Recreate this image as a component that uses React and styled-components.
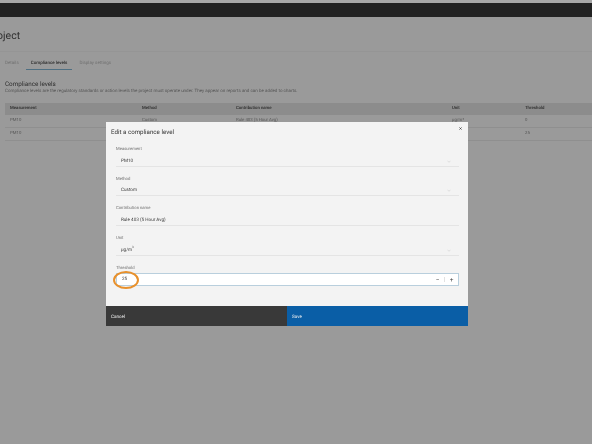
import React from "react";
import styled, { createGlobalStyle } from "styled-components";

const Global = createGlobalStyle`
  html, body { margin: 0; padding: 0; width: 592px; height: 444px; overflow: hidden; background: #9a9a9a; }
  body { font-family: Roboto, "Liberation Sans", sans-serif; text-rendering: geometricPrecision; }
  * { box-sizing: border-box; }
`;
const Page = styled.div`
  position: relative; width: 592px; height: 444px; overflow: hidden; background: #9a9a9a;
  color: #3a3a3a; filter: blur(0.35px);
`;
const TopStrip = styled.div`height: 3px; background: #a8a8a8;`;
const TopBar = styled.div`height: 14px; background: #222222;`;
const TitleBar = styled.div`
  height: 35px; margin-left: -13px; padding-top: 12px;
  border-bottom: 1px solid #959595; font-size: 10.5px; line-height: 13px; color: #2e2e2e;
`;
const Tabs = styled.nav`display: flex; gap: 12px; padding: 8px 0 0 5px; height: 19px;`;
const Tab = styled.div`
  position: relative; font-size: 4.5px; line-height: 8px; white-space: nowrap;
  font-weight: ${p => (p.$active ? 500 : 400)};
  color: ${p => (p.$active ? "#2c2c2c" : "#707070")};
  ${p => p.$active && `
    &::after { content: ""; position: absolute; left: -5px; right: -5px; top: 9px; height: 1px; background: #4f6f82; }
  `}
`;
const Section = styled.section`padding: 8.5px 0 0 5px;`;
const Heading = styled.h2`margin: 0; font-weight: 400; font-size: 6.3px; line-height: 9px; color: #2e2e2e;`;
const Description = styled.p`margin: 0; font-size: 4.5px; line-height: 6px; color: #555; white-space: nowrap;`;
const Table = styled.div`margin-top: 8px;`;
const Row = styled.div`
  display: grid; grid-template-columns: 132px 94px 216px 73px 1fr; align-items: center;
  height: ${p => (p.$head ? "12px" : "13px")}; padding: ${p => (p.$head ? "1px" : "0")} 0 0 5px;
  background: ${p => (p.$head ? "#8c8c8c" : "#9a9a9a")};
  border-bottom: 1px solid ${p => (p.$head ? "#8c8c8c" : "#8f8f8f")};
  font-size: 4.3px; font-weight: ${p => (p.$head ? 500 : 400)};
  color: ${p => (p.$head ? "#2a2a2a" : "#565656")};
`;
const Overlay = styled.div`
  position: absolute; left: 106px; top: 122px; width: 362px; height: 204px;
  background: #f3f3f3; display: flex; flex-direction: column;
`;
const ModalHead = styled.div`display: flex; justify-content: space-between; padding: 5px 6px 0 5px; height: 25px;`;
const ModalTitle = styled.div`font-size: 6.2px; line-height: 10px; color: #333;`;
const Close = styled.svg`width: 3px; height: 3px; margin-top: 0; margin-right: 0;`;
const Form = styled.div`flex: 1; padding: 0 9px 0 10px; display: flex; flex-direction: column; gap: 10.2px;`;
const Field = styled.div`display: flex; flex-direction: column;`;
const Label = styled.label`font-size: 4.2px; line-height: 6px; height: 6px; color: #707070;`;
const Control = styled.div`
  height: 13.5px; padding: 3.5px 5px 0; display: flex; align-items: center; justify-content: space-between;
  border-bottom: 1px solid #e4e4e4; font-size: 4.6px; color: #3a3a3a;
`;
const Sup = styled.sup`font-size: 3px; line-height: 0;`;
const Chevron = styled.svg`width: 4px; height: 3px; margin-right: 3px;`;
const NumberInput = styled.div`
  height: 13.5px; margin-top: 1.2px; padding: 0 0 0 5px; display: flex; align-items: center; justify-content: space-between;
  background: #fff; border: 1px solid #b9cfdd; border-bottom-width: 1.5px; font-size: 4.6px; color: #3a3a3a;
`;
const Stepper = styled.div`display: flex; align-items: center; height: 100%;`;
const Step = styled.span`width: 13px; text-align: center; font-size: 6.5px; line-height: 12px; color: #444;`;
const Divider = styled.span`width: 1px; height: 5px; background: #e2e2e2;`;
const Footer = styled.div`display: grid; grid-template-columns: 181px 181px; height: 20px;`;
const FooterButton = styled.div`
  background: ${p => (p.$primary ? "#0a5ea6" : "#393939")}; color: #f2f2f2;
  font-size: 4.6px; padding: 2px 5px 0; display: flex; align-items: center;
`;
const Annotation = styled.svg`position: absolute; left: 113px; top: 271px; width: 26px; height: 18px;`;

const ChevronIcon = () => (
  <Chevron viewBox="0 0 8 6"><path d="M1 1.5l3 3 3-3" fill="none" stroke="#d0d0d0" strokeWidth="1.2" /></Chevron>
);

export default function App() {
  return (
    <Page>
      <Global />
      <TopStrip />
      <TopBar />
      <TitleBar>Project</TitleBar>
      <Tabs>
        <Tab>Details</Tab>
        <Tab $active>Compliance levels</Tab>
        <Tab>Display settings</Tab>
      </Tabs>
      <Section>
        <Heading>Compliance levels</Heading>
        <Description>Compliance levels are the regulatory standards or action levels the project must operate under. They appear on reports and can be added to charts.</Description>
        <Table>
          <Row $head><span>Measurement</span><span>Method</span><span>Contribution name</span><span>Unit</span><span>Threshold</span></Row>
          <Row><span>PM10</span><span>Custom</span><span>Rule 403 (5 Hour Avg)</span><span>µg/m³</span><span>0</span></Row>
          <Row><span>PM10</span><span>Custom</span><span>Rule 403 (5 Hour Avg)</span><span>µg/m³</span><span>25</span></Row>
        </Table>
      </Section>
      <Overlay>
        <ModalHead>
          <ModalTitle>Edit a compliance level</ModalTitle>
          <Close viewBox="0 0 8 8"><path d="M1 1l6 6M7 1l-6 6" stroke="#333" strokeWidth="1.8" /></Close>
        </ModalHead>
        <Form>
          <Field><Label>Measurement</Label><Control>PM10<ChevronIcon /></Control></Field>
          <Field><Label>Method</Label><Control>Custom<ChevronIcon /></Control></Field>
          <Field><Label>Contribution name</Label><Control>Rule 403 (5 Hour Avg)</Control></Field>
          <Field><Label>Unit</Label><Control><span>µg/m<Sup>3</Sup></span><ChevronIcon /></Control></Field>
          <Field>
            <Label>Threshold</Label>
            <NumberInput>25<Stepper><Step>−</Step><Divider /><Step>+</Step></Stepper></NumberInput>
          </Field>
        </Form>
        <Footer>
          <FooterButton>Cancel</FooterButton>
          <FooterButton $primary>Save</FooterButton>
        </Footer>
      </Overlay>
      <Annotation viewBox="0 0 26 18"><ellipse cx="13" cy="9" rx="12" ry="8" fill="none" stroke="#e8912d" strokeWidth="2" /></Annotation>
    </Page>
  );
}
